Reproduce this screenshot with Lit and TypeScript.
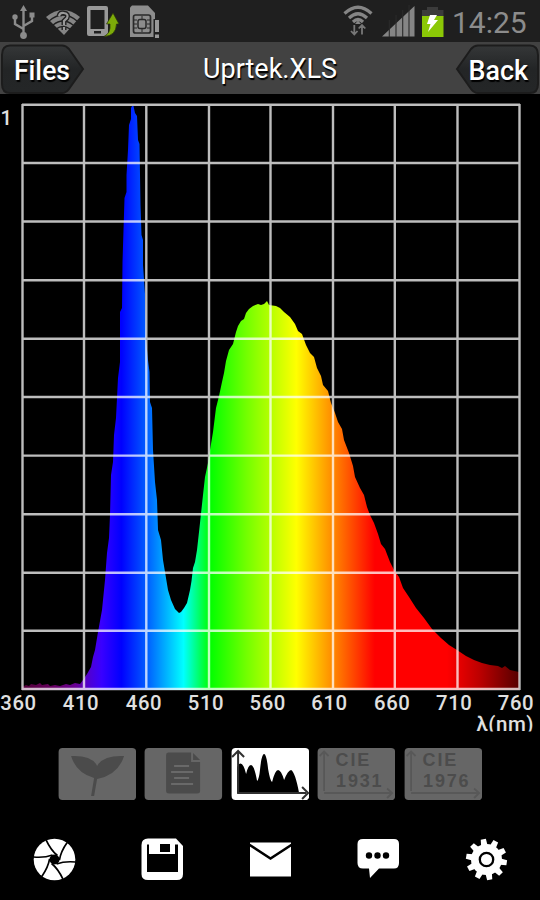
import { LitElement, html, svg, css } from "lit";
import { customElement } from "lit/decorators.js";

const GRID_X = [22.5, 84, 146.3, 209, 270.5, 333, 394.8, 457.5, 519.5];
const GRID_Y = [104.7, 163, 221.5, 280.2, 338.8, 397, 455.6, 514.3, 572.7, 630.8, 689];
const LABELS: [number, number][] = [
  [360, 18.5], [410, 81], [460, 144], [510, 206], [560, 267.8],
  [610, 329.5], [660, 392.3], [710, 454.3], [760, 516],
];
const CURVE =
  "22,690 22,687 26,685 29,686 31,684 36,685 40,683 42,685 48,684 50,686 55,685 60,686 66,684 70,685 75,683 80,684 83,680 87,674 91,667 93,657 95,650 98,632 102,610 105,580 107,553 109,538 110,515 111,475 113,462 114,435 116,418 117,398 118,378 120,362 120,312 122,308 122.5,262 123.5,230 124.5,198 126.5,192 126.5,175 128,150 129,125 131,119 131,108 132,106 133.5,106 135,113 137,116 138,140 139.5,144 140.5,205 141.5,235 143,240 143,265 145,294 146,340 148,360 149.5,372 150,402 152,408 153,450 155,482 157,500 158,530 161,540 163,560 165,572 168,590 171,600 175,609 179,613 181,612 184,608 187,603 190,590 191.5,581 193,568 195,562 197,550 200,523 203,495 205,477 208,463 210,450 213,432 216,408 219,396 222,382 224,373 226,361 229,350 233,344 236,332 238,326 241,321 244,319 246,313 249,309 253,306 258,304 261,305 264,304 267,301 269,305 276,306 280,308 284,312 290,317 295,324 298,331 302,334 306,345 310,353 314,357 317,368 321,376 323,385 328,391 331,403 335,413 338,422 342,429 344,440 349,453 353,466 355,477 360,488 364,495 367,507 370,515 374,523 378,534 381,544 385,549 390,562 394,570 399,577 403,588 409,597 416,608 424,618 432,629 441,638 449,645 457,650 466,656 474,660 482,663 490,665 498,666 502,668 505,666 510,670 519,672 519,690";

const statusIcons = html`
  <svg class="status-icons" width="170" height="42" viewBox="0 0 170 42">
    <g fill="none" stroke="#8b8b8b" stroke-width="2.4">
      <path d="M23.5 8V35M23.5 29L15 24V18M23.5 26L32 21V15"/>
    </g>
    <g fill="#8b8b8b">
      <path d="M23.5 5L27 11H20Z"/><circle cx="23.5" cy="35.5" r="3.4"/>
      <circle cx="15" cy="17" r="2.7"/><rect x="29.5" y="12.5" width="5" height="5"/>
    </g>
    <path d="M46 17Q63 3 80 17L64 35Z" fill="#858585"/>
    <g fill="none" stroke="#202020" stroke-width="1.3"><path d="M49 21Q63 9 77 21M53 25Q63 17 73 25M56 29Q63 24 70 29"/></g>
    <path d="M59 16Q60 12 64 13Q69 14 67 18L64 21V25M64 27V30" fill="none" stroke="#202020" stroke-width="5"/>
    <path d="M59 16Q60 12 64 13Q69 14 67 18L64 21V25M64 27V30" fill="none" stroke="#999" stroke-width="2.2"/>
    <path fill-rule="evenodd" fill="#999" d="M89 6H106Q108 6 108 8V34Q108 36 106 36H89Q87 36 87 34V8Q87 6 89 6ZM90.5 10V29H104.500V10ZM94 31V33.500H101V31Z"/>
    <path d="M104 36.500Q111 33 110 24H106.500L113 13L119 24H116.500Q116 36 104 36.500Z" fill="#7dab09" stroke="#29330c" stroke-width=".7"/>
    <path d="M132 5.500H148L155 13V37H130V7.500Z" fill="#8d8d8d"/>
    <rect x="133.500" y="15" width="17" height="18" rx="2" fill="#8d8d8d" stroke="#292929" stroke-width="1.700"/>
    <rect x="138" y="19.500" width="8" height="9" rx="2" fill="none" stroke="#292929" stroke-width="1.500"/>
    <path d="M134 20H137M134 24H137M134 28H137M147 20H150M147 24H150M147 28H150M142 16V19M142 29V32" stroke="#292929"/>
    <path d="M153.500 19H160.500V39H153.500Z" fill="#202020"/><path d="M155 20H159V32H155ZM155 34.500H159V38H155Z" fill="#999"/>
  </svg>`;

const signalIcons = html`
  <svg class="signal-icons" width="110" height="42" viewBox="338 0 110 42">
    <g fill="none" stroke="#858585" stroke-width="3.200">
      <path d="M344.500 13.500Q358 1 371.500 13.500M349 18Q358 9.500 367 18"/><path d="M353 22Q358 17 363 22"/>
    </g>
    <path d="M358 20.500L361 24H355Z" fill="#858585"/>
    <path d="M354.300 25V34M351 31L354.300 34.500L357.500 31M362 34.500V26M358.700 28.500L362 25L365.300 28.500" fill="none" stroke="#777" stroke-width="1.800"/>
    <path d="M382 36.500L414.500 6V36.500Z" fill="#858585"/>
    <path d="M389.300 20V37M396 15V37M402.700 10V37M409 5V37" stroke="#2b2b2b" stroke-width="1.100"/>
    <path d="M427 7H438V10H443.500V17H422V10H427Z" fill="#3b3b3b"/>
    <rect x="422" y="16" width="21.500" height="21" fill="#8bc806"/>
    <path d="M430 15H437L434 20H438L428 32L430.500 24H427Z" fill="#fff"/>
  </svg>`;

const blades = [0, 1, 2, 3, 4, 5].map((i) => {
  const turn = `rotate(${i * 60})`;
  return svg`<path transform=${turn} d="M2 4.500Q10 1.500 21 2.500" fill="none" stroke="#000" stroke-width="1.7"/>`;
});
const teeth = Array.from({ length: 10 }, (_, i) => {
  const turn = `rotate(${i * 36 - 9})`;
  return svg`<path transform=${turn} d="M-3.200 -14L-2.600 -20.500H2.600L3.200 -14Z"/>`;
});

@customElement("spectrum-chart")
class SpectrumChart extends LitElement {
  static styles = css`
    :host { display: block; height: 646px; }
    svg { display: block; }
    .grid { stroke: #fff; stroke-opacity: .74; stroke-width: 2.4; fill: none; }
    .label { fill: #e0e0e0; font: 500 20.300px Roboto, sans-serif; letter-spacing: .6px; text-anchor: middle; }
    .unit { fill: #e0e0e0; font: 500 20.500px Roboto, "Noto Sans", sans-serif; }
  `;
  render() {
    return html`<svg width="540" height="646" viewBox="0 94 540 646">
      <defs><linearGradient id="spectrum" gradientUnits="userSpaceOnUse" x1="22" y1="0" x2="519" y2="0">
        <stop offset="0" stop-color="#520038"/><stop offset=".06" stop-color="#66005f"/>
        <stop offset=".11" stop-color="#680096"/><stop offset=".14" stop-color="#4b00dc"/>
        <stop offset=".16" stop-color="#3900ff"/><stop offset=".2" stop-color="#0000ff"/>
        <stop offset=".255" stop-color="#0065ff"/><stop offset=".325" stop-color="#00ffff"/>
        <stop offset=".378" stop-color="#00ff00"/><stop offset=".45" stop-color="#70ff00"/>
        <stop offset=".552" stop-color="#ffff00"/><stop offset=".63" stop-color="#ff8200"/>
        <stop offset=".71" stop-color="#ff0000"/><stop offset=".855" stop-color="#ff0000"/>
        <stop offset=".92" stop-color="#bd0000"/><stop offset="1" stop-color="#560000"/>
      </linearGradient></defs>
      <polygon points=${CURVE} fill="url(#spectrum)"/>
      <path class="grid" d=${GRID_X.map((x) => `M${x} 104V690`).join("") + GRID_Y.map((y) => `M22 ${y}H520`).join("")}/>
      <text class="label" x="6.500" y="125">1</text>
      ${LABELS.map(([n, x]) => svg`<text class="label" x=${x} y="710">${n}</text>`)}
      <text class="unit" x="476.500" y="730.500" textLength="57">λ(nm)</text>
      <rect y="731.500" width="540" height="8" fill="#000"/>
    </svg>`;
  }
}

@customElement("app-root")
class AppRoot extends LitElement {
  static styles = css`
    :host { display: flex; flex-direction: column; width: 540px; height: 900px; background: #000; overflow: hidden; font-family: Roboto, sans-serif; }
    svg { display: block; flex: none; }
    .status { display: flex; justify-content: space-between; height: 42px; background: #1f1f1f; }
    .right { display: flex; }
    .clock { width: 92px; box-sizing: border-box; padding-left: 4px; color: #8c8c8c; font-size: 30px; line-height: 45px; white-space: nowrap; }
    .header { display: grid; grid-template-columns: 85px 1fr 85px; height: 52px; background: #424242; color: #fff; font-size: 27px; line-height: 55px; text-align: center; text-shadow: 1px 2px 1px #000; }
    .nav text { fill: #fff; font: 500 27px Roboto, sans-serif; text-shadow: 1px 2px 1px #000; }
    .tabs { display: flex; gap: 8.200px; padding: 7px 0 0 58px; height: 54px; }
    .actions { display: flex; justify-content: space-between; padding: 36.500px 32px 0 33px; }
    .cie { fill: #4c4c4c; font: 700 18px "Liberation Sans", sans-serif; letter-spacing: 1.800px; }
  `;

  tab(content: unknown, active = false) {
    return html`<svg width="78.200" height="54" viewBox="0 0 78 54">
      <rect x=".5" y="1" width="77.500" height="52" rx="4" fill=${active ? "#fff" : "#666"}/>${content}</svg>`;
  }

  cie(year: string) {
    return this.tab(svg`
      <path d="M7 44V5M2.500 9L7 4.500L11.500 9M7 46H74M70 41.500L75 46L70 51" fill="none" stroke="#585858" stroke-width="1.800"/>
      <text class="cie" x="18.500" y="18.500">CIE</text><text class="cie" x="19" y="40">${year}</text>`);
  }

  render() {
    return html`
      <div class="status">${statusIcons}
        <div class="right">${signalIcons}<span class="clock">14:25</span></div>
      </div>
      <div class="header">
        <svg class="nav" width="85" height="52" viewBox="0 0 85 52">
          <defs><linearGradient id="dark" x2="0" y2="1"><stop stop-color="#353738"/><stop offset=".5" stop-color="#232526"/><stop offset="1" stop-color="#242627"/></linearGradient></defs>
          <path d="M10 3.500H62Q66 3.500 69 7L83 27L69 47Q66 51 62 51H10Q2 51 2 42V13Q2 3.500 10 3.500Z" fill="url(#dark)" stroke="#1c1c1c" stroke-width="2"/>
          <text x="14" y="37.500" textLength="56" lengthAdjust="spacingAndGlyphs">Files</text>
        </svg>
        <span>Uprtek.XLS</span>
        <svg class="nav" width="85" height="52" viewBox="0 0 85 52">
          <path d="M75 3.500H23Q19 3.500 16 7L2 27L16 47Q19 51 23 51H75Q83 51 83 42V13Q83 3.500 75 3.500Z" fill="url(#dark)" stroke="#1c1c1c" stroke-width="2"/>
          <text x="13.500" y="37.500" textLength="59.500" lengthAdjust="spacingAndGlyphs">Back</text>
        </svg>
      </div>
      <spectrum-chart></spectrum-chart>
      <div class="tabs">
        ${this.tab(svg`<path d="M13 9Q34 8 39 19Q45 8 66 9Q60 28 39 32L36 49H33L36 31Q18 26 13 9Z" fill="#4b4b4b"/>`)}
        ${this.tab(svg`<path d="M24 5.500H47V15H56V44Q56 46.500 53 46.500H25Q22 46.500 22 44V8Q22 5.500 24 5.500Z" fill="#4b4b4b"/>
          <path d="M49 6L56 13H49Z" fill="#4b4b4b"/><path d="M30 19H45M27 25H49M30 31H45M27 37H49" stroke="#696969" stroke-width="2"/>`)}
        ${this.tab(svg`<path d="M6 46V20L8 17Q12 14 15 27Q17 18 20 18Q23 18 26 34Q28 32 29 22C31 2 35 2 37 22Q39 34 41 35Q44 23 47 23Q50 23 53 33Q57 23 60 23Q64 25 68 46Z" fill="#000"/>
          <path d="M7 47V4M1 10L7 4L13 10M6 46H75M71 40L77 46L71 52" fill="none" stroke="#303030" stroke-width="2"/>`, true)}
        ${this.cie("1931")}${this.cie("1976")}
      </div>
      <div class="actions">
        <svg width="43" height="43" viewBox="-21.500 -21.500 43 43"><circle r="20.800" fill="#fff"/><circle r="5" fill="#000"/>${blades}</svg>
        <svg width="43" height="43" viewBox="0 0 43 43">
          <path d="M7 .5H35L42 8V36Q42 42 36 42H7Q.5 42 .5 36V7Q.5 .5 7 .5Z" fill="#fff"/>
          <path d="M6 6.500H8V16H34V6.500H37V34H6Z" fill="#000"/><rect x="19" y="6" width="10" height="8" fill="#000"/>
        </svg>
        <svg width="43" height="43" viewBox="0 0 43 43"><path d="M1 4.500H42V38.500H1Z" fill="#fff"/><path d="M0 6.500L21.500 20.500L43 6.500" fill="none" stroke="#000" stroke-width="2.500"/></svg>
        <svg width="43" height="43" viewBox="0 0 43 43">
          <path d="M6 1H37Q42 1 42 6V25Q42 30.500 37 30.500H22L13 40L12 30.500H6Q.5 30.500 .5 25V6Q.5 1 6 1Z" fill="#fff"/>
          <circle cx="12" cy="17.500" r="3.200"/><circle cx="20.500" cy="17.500" r="3.200"/><circle cx="29" cy="17.500" r="3.200"/>
        </svg>
        <svg width="43" height="43" viewBox="-21.500 -21.500 43 43"><g fill="#fff"><circle r="15.500"/>${teeth}</g><circle r="6.700" fill="#fff" stroke="#000" stroke-width="2.300"/></svg>
      </div>`;
  }
}
